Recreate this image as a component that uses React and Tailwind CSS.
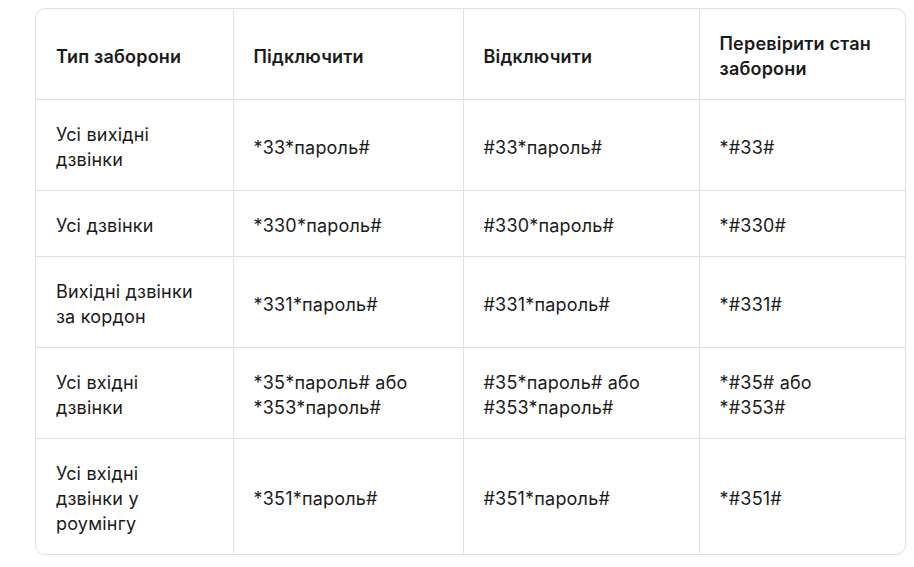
const ROWS = [
  [['Усі вихідні', 'дзвінки'], ['*33*пароль#'], ['#33*пароль#'], ['*#33#']],
  [['Усі дзвінки'], ['*330*пароль#'], ['#330*пароль#'], ['*#330#']],
  [['Вихідні дзвінки', 'за кордон'], ['*331*пароль#'], ['#331*пароль#'], ['*#331#']],
  [['Усі вхідні', 'дзвінки'], ['*35*пароль# або', '*353*пароль#'], ['#35*пароль# або', '#353*пароль#'], ['*#35# або', '*#353#']],
  [['Усі вхідні', 'дзвінки у', 'роумінгу'], ['*351*пароль#'], ['#351*пароль#'], ['*#351#']],
]

const HEAD = [['Тип заборони'], ['Підключити'], ['Відключити'], ['Перевірити стан', 'заборони']]

function Lines({ lines }) {
  return lines.map((l, i) => (
    <span key={i} className="block whitespace-nowrap">{l}</span>
  ))
}

export default function App() {
  return (
    <div className="min-h-screen bg-white pl-[35px] pt-[8px] font-['Inter',sans-serif] text-[#1a1a1a]">
      <div className="w-[871px] border border-[#e0e0e0] rounded-[10px] overflow-hidden">
        <table className="w-full table-fixed border-collapse text-[18px] leading-[25px] tracking-[0.2px]">
          <colgroup>
            <col className="w-[197px]" />
            <col className="w-[230px]" />
            <col className="w-[236px]" />
            <col />
          </colgroup>
          <thead>
            <tr className="h-[90px]">
              {HEAD.map((h, i) => (
                <th key={i} className={`pl-[20px] pr-[10px] pt-[22px] pb-[18px] text-left font-semibold align-middle ${i > 0 ? 'border-l border-[#e0e0e0]' : ''}`}>
                  <Lines lines={h} />
                </th>
              ))}
            </tr>
          </thead>
          <tbody>
            {ROWS.map((r, ri) => (
              <tr key={ri} className="border-t border-[#e0e0e0]">
                {r.map((c, i) => (
                  <td key={i} className={`pl-[20px] pr-[10px] pt-[22px] pb-[18px] align-middle ${i > 0 ? 'border-l border-[#e0e0e0]' : ''}`}>
                    <Lines lines={c} />
                  </td>
                ))}
              </tr>
            ))}
          </tbody>
        </table>
      </div>
    </div>
  )
}
